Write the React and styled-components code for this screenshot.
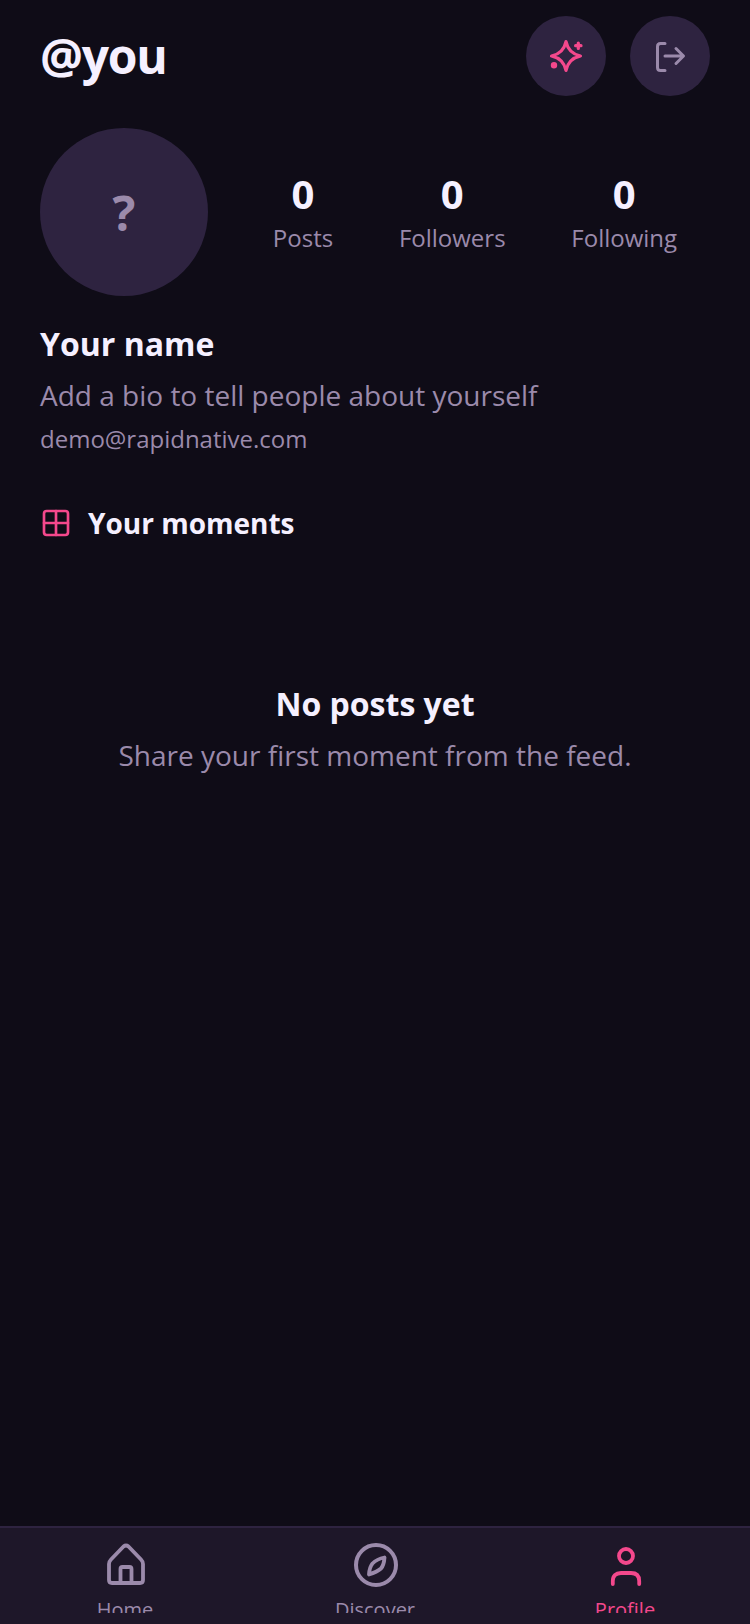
import styled, { createGlobalStyle } from "styled-components";
import { Grid2x2 } from "lucide-react";

const GlobalStyle = createGlobalStyle`
  html, body { margin: 0; padding: 0; background: #0f0c17; }
  * { box-sizing: border-box; }
`;

const pink = "#f4488c";
const muted = "#9b8aab";

const Screen = styled.div`
  width: 750px;
  height: 1624px;
  background: #0f0c17;
  color: #f5f0ff;
  font-family: "Open Sans", sans-serif;
  display: flex;
  flex-direction: column;
  overflow: hidden;
`;
const Main = styled.main`
  flex: 1;
  padding: 16px 40px 0;
`;
const Header = styled.header`
  display: flex;
  align-items: center;
  justify-content: space-between;
`;
const Handle = styled.h1`
  margin: 0;
  font-size: 48px;
  line-height: 80px;
  font-weight: 700;
  letter-spacing: -1.25px;
`;
const HeaderActions = styled.div`
  display: flex;
  gap: 24px;
`;
const RoundButton = styled.button`
  width: 80px;
  height: 80px;
  border: 0;
  padding: 0;
  border-radius: 50%;
  background: #2e2340;
  display: flex;
  align-items: center;
  justify-content: center;
  color: ${(p) => p.$color};
`;
const ProfileRow = styled.section`
  display: flex;
  align-items: center;
  margin-top: 32px;
`;
const Avatar = styled.div`
  width: 168px;
  height: 168px;
  border-radius: 50%;
  background: #2e2340;
  color: ${muted};
  font-size: 48px;
  font-weight: 700;
  display: flex;
  align-items: center;
  justify-content: center;
`;
const Stats = styled.div`
  flex: 1;
  display: flex;
  justify-content: space-around;
  padding-left: 32px;
`;
const Stat = styled.div`
  display: flex;
  flex-direction: column;
  align-items: center;
`;
const StatValue = styled.span`
  font-size: 40px;
  line-height: 52px;
  font-weight: 700;
`;
const StatLabel = styled.span`
  font-size: 24px;
  line-height: 36px;
  color: ${muted};
`;
const Name = styled.h2`
  margin: 26px 0 0;
  font-size: 32px;
  line-height: 44px;
  font-weight: 700;
`;
const Bio = styled.p`
  margin: 7px 0 0;
  font-size: 28px;
  line-height: 44px;
  color: ${muted};
`;
const Email = styled.p`
  margin: 4px 0 0;
  font-size: 24px;
  line-height: 36px;
  color: ${muted};
`;
const SectionTitle = styled.div`
  display: flex;
  align-items: center;
  gap: 16px;
  margin-top: 46px;
  font-size: 28px;
  line-height: 40px;
  font-weight: 700;
  color: #f5f0ff;
`;
const Empty = styled.div`
  margin-top: 139px;
  text-align: center;
`;
const EmptyTitle = styled.h3`
  margin: 0;
  font-size: 32px;
  line-height: 44px;
  font-weight: 700;
`;
const EmptyText = styled.p`
  margin: 7px 0 0;
  font-size: 28px;
  line-height: 44px;
  color: ${muted};
`;
const TabBar = styled.nav`
  height: 98px;
  flex: none;
  background: #1e1729;
  border-top: 2px solid #2e2340;
  display: flex;
`;
const Tab = styled.div`
  flex: 1;
  height: 85px;
  overflow: hidden;
  display: flex;
  flex-direction: column;
  align-items: center;
  padding-top: 13px;
  color: ${(p) => (p.$active ? pink : muted)};
`;
const TabLabel = styled.span`
  font-size: 20px;
  line-height: 28px;
  margin-top: 7px;
`;
const Icon = styled.svg`
  flex: none;
  fill: none;
  stroke: currentColor;
  stroke-linecap: round;
  stroke-linejoin: round;
`;

const SparkIcon = () => (
  <Icon width="40" height="40" viewBox="0 0 40 40" strokeWidth="3.2">
    <path d="M20 5.5Q22.5 17.5 34.5 20Q22.5 22.5 20 34.5Q17.5 22.5 5.5 20Q17.5 17.5 20 5.5Z" />
    <path d="M32.3 7V12.4M29.6 9.7H35" />
    <circle cx="8" cy="29.3" r="1.6" />
  </Icon>
);

const ExitIcon = () => (
  <Icon width="40" height="40" viewBox="0 0 40 40" strokeWidth="3">
    <path d="M15 7.5H10.5Q7.5 7.5 7.5 10.5V31.5Q7.5 34.5 10.5 34.5H15" />
    <path d="M15 20H33M26 12.5L33.5 20L26 27.5" />
  </Icon>
);

const HomeIcon = () => (
  <Icon width="48" height="48" viewBox="-1 0 48 48" strokeWidth="3.8">
    <path d="M7 23C7 21.5 7.5 20 9 18.5L21.5 5.5Q24 3.5 26.5 5.5L39 18.5C40.5 20 41 21.5 41 23V39Q41 42 38 42H10Q7 42 7 39Z" />
    <path d="M18.5 42V28Q18.5 26 20.5 26H27.5Q29.5 26 29.5 28V42" />
  </Icon>
);

const CompassIcon = () => (
  <Icon width="48" height="48" viewBox="-1 0 48 48" strokeWidth="4">
    <circle cx="24" cy="24" r="20" />
    <path
      strokeWidth="3.8"
      d="M32.5 16.5Q32 24 29 27.5Q25 31 17 33.5Q17.5 26 20.5 22.5Q25 18 32.5 16.5Z"
    />
  </Icon>
);

const PersonIcon = () => (
  <Icon width="48" height="48" viewBox="-1 0 48 48" strokeWidth="3.8">
    <circle cx="24" cy="15" r="7" />
    <path d="M10.8 43V40Q10.8 32 19 32H29Q37.2 32 37.2 40V43" />
  </Icon>
);

const stats = [
  ["0", "Posts"],
  ["0", "Followers"],
  ["0", "Following"],
];

const tabs = [
  ["Home", HomeIcon],
  ["Discover", CompassIcon],
  ["Profile", PersonIcon],
];

export default function App() {
  return (
    <Screen>
      <GlobalStyle />
      <Main>
        <Header>
          <Handle>@you</Handle>
          <HeaderActions>
            <RoundButton $color={pink}>
              <SparkIcon />
            </RoundButton>
            <RoundButton $color={muted}>
              <ExitIcon />
            </RoundButton>
          </HeaderActions>
        </Header>
        <ProfileRow>
          <Avatar>?</Avatar>
          <Stats>
            {stats.map(([value, label]) => (
              <Stat key={label}>
                <StatValue>{value}</StatValue>
                <StatLabel>{label}</StatLabel>
              </Stat>
            ))}
          </Stats>
        </ProfileRow>
        <Name>Your name</Name>
        <Bio>Add a bio to tell people about yourself</Bio>
        <Email>demo@rapidnative.com</Email>
        <SectionTitle>
          <Grid2x2 size={32} color={pink} strokeWidth={2} />
          Your moments
        </SectionTitle>
        <Empty>
          <EmptyTitle>No posts yet</EmptyTitle>
          <EmptyText>Share your first moment from the feed.</EmptyText>
        </Empty>
      </Main>
      <TabBar>
        {tabs.map(([label, TabIcon]) => (
          <Tab key={label} $active={label === "Profile"}>
            <TabIcon />
            <TabLabel>{label}</TabLabel>
          </Tab>
        ))}
      </TabBar>
    </Screen>
  );
}
